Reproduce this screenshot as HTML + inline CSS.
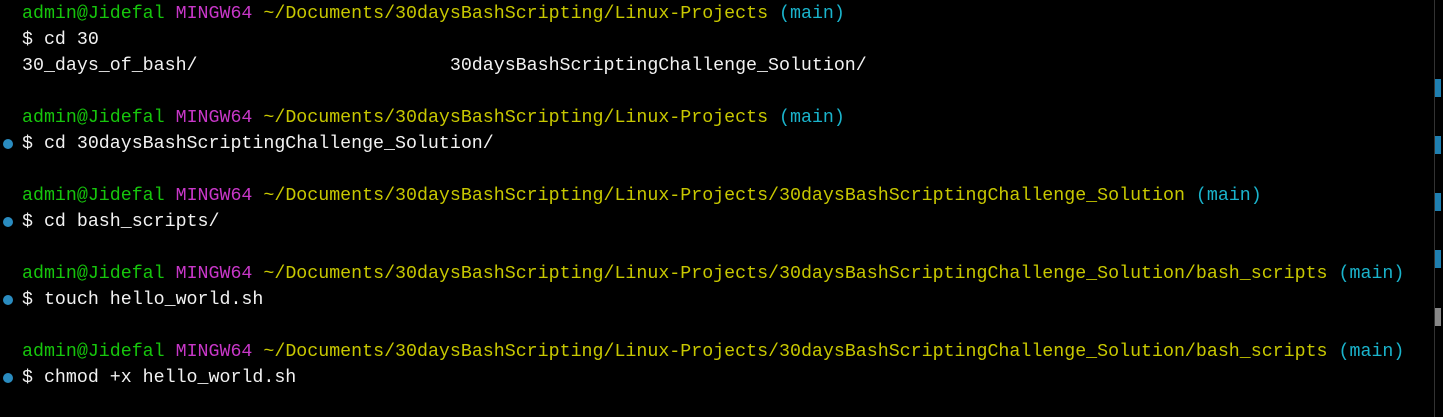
<!DOCTYPE html>
<html><head><meta charset="utf-8"><style>
html,body{margin:0;padding:0;background:#000;width:1443px;height:417px;overflow:hidden}
.t{position:absolute;left:22px;top:1px;font-family:"Liberation Mono",monospace;font-size:18.3px;line-height:26px;color:#f2f2f2;white-space:pre}
.g{color:#16c60c}.m{color:#c837c8}.y{color:#c8c800}.c{color:#1ab4cc}
.d{position:absolute;left:3px;width:10px;height:10px;border-radius:50%;background:#2a8cc0}
.sb{position:absolute;left:1434px;top:0;width:1px;height:417px;background:#333}
.mk{position:absolute;left:1435px;width:6px;height:18px;background:#1f7fb0}
</style></head><body>
<div class="t"><span class="g">admin@Jidefal</span> <span class="m">MINGW64</span> <span class="y">~/Documents/30daysBashScripting/Linux-Projects</span> <span class="c">(main)</span>
$ cd 30
30_days_of_bash/                       30daysBashScriptingChallenge_Solution/

<span class="g">admin@Jidefal</span> <span class="m">MINGW64</span> <span class="y">~/Documents/30daysBashScripting/Linux-Projects</span> <span class="c">(main)</span>
$ cd 30daysBashScriptingChallenge_Solution/

<span class="g">admin@Jidefal</span> <span class="m">MINGW64</span> <span class="y">~/Documents/30daysBashScripting/Linux-Projects/30daysBashScriptingChallenge_Solution</span> <span class="c">(main)</span>
$ cd bash_scripts/

<span class="g">admin@Jidefal</span> <span class="m">MINGW64</span> <span class="y">~/Documents/30daysBashScripting/Linux-Projects/30daysBashScriptingChallenge_Solution/bash_scripts</span> <span class="c">(main)</span>
$ touch hello_world.sh

<span class="g">admin@Jidefal</span> <span class="m">MINGW64</span> <span class="y">~/Documents/30daysBashScripting/Linux-Projects/30daysBashScriptingChallenge_Solution/bash_scripts</span> <span class="c">(main)</span>
$ chmod +x hello_world.sh</div>
<div class="d" style="top:139px"></div>
<div class="d" style="top:217px"></div>
<div class="d" style="top:295px"></div>
<div class="d" style="top:373px"></div>
<div class="sb"></div>
<div class="mk" style="top:79px"></div>
<div class="mk" style="top:136px"></div>
<div class="mk" style="top:193px"></div>
<div class="mk" style="top:250px"></div>
<div class="mk" style="top:308px;background:#888"></div>
</body></html>
